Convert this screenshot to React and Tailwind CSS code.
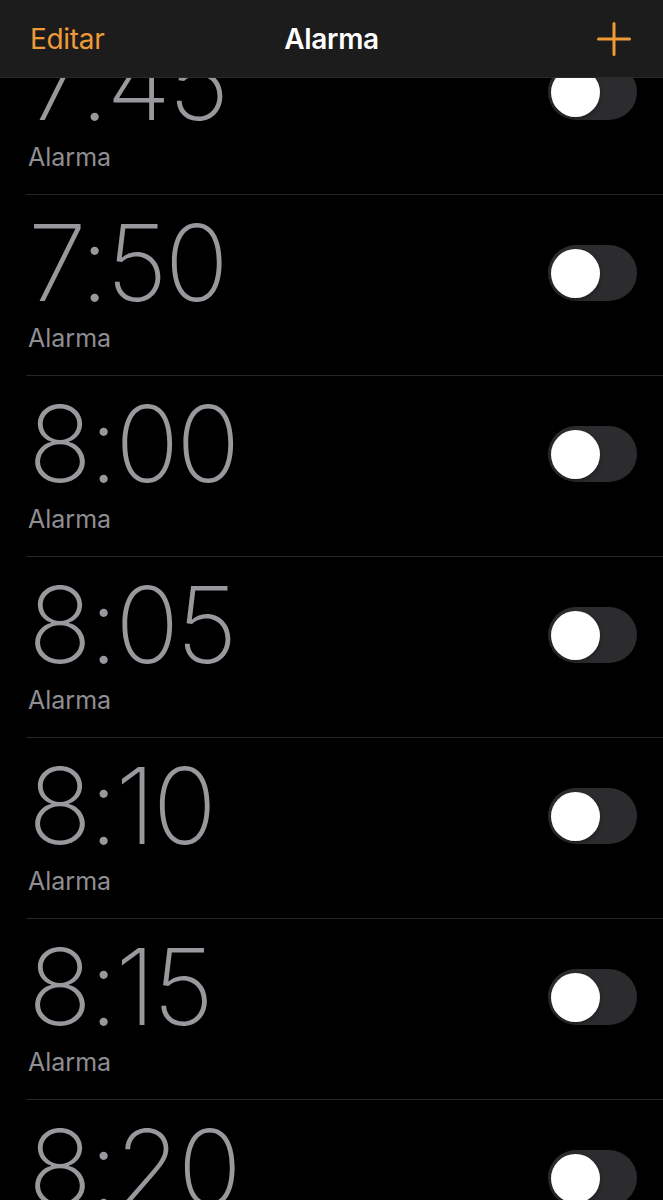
// App.jsx
// iOS style alarm list (dark mode), scrolled a bit so the first row hides under the nav bar

const alarms = ['7:45', '7:50', '8:00', '8:05', '8:10', '8:15', '8:20']

function Toggle() {
  return (
    <div className="relative h-[56px] w-[89px] rounded-full bg-[#2c2c2f]">
      <div className="absolute left-[3px] top-[4px] h-[49px] w-[49px] rounded-full bg-white shadow-[0_2px_4px_rgba(0,0,0,0.35)]" />
    </div>
  )
}

function AlarmRow({ time }) {
  return (
    <div className="flex h-[181px] items-start justify-between border-b border-[#262628] pr-[26px]">
      <div className="flex flex-col pl-[2px] pt-[15px]">
        <span className="text-[106px] font-extralight leading-none tracking-[-3px] text-[#98989d]">
          {time}
        </span>
        <span className="mt-[10px] text-[25px] leading-none text-[#8e8e93]">Alarma</span>
      </div>
      <div className="mt-[50px]">
        <Toggle />
      </div>
    </div>
  )
}

export default function App() {
  return (
    <div
      className="relative h-[1200px] w-full overflow-hidden bg-black"
      style={{ fontFamily: 'Inter, "Noto Sans", sans-serif' }}
    >
      {/* list, scrolled up by a few px */}
      <div className="pl-[26px] pt-[14px]">
        {alarms.map((t) => (
          <AlarmRow key={t} time={t} />
        ))}
      </div>

      {/* nav bar sits over the list */}
      <div className="absolute inset-x-0 top-0 flex h-[78px] items-center justify-between border-b border-[#2a2a2a] bg-[#1c1c1c] px-[30px]">
        <span className="text-[28px] leading-none tracking-[-0.3px] text-[#f09a37]">Editar</span>
        <span className="absolute left-1/2 -translate-x-1/2 text-[28px] font-semibold leading-none tracking-[-0.3px] text-white">
          Alarma
        </span>
        <svg width="34" height="34" viewBox="0 0 34 34" className="mr-[2px]">
          <path d="M17 1.5v31M1.5 17h31" stroke="#f09a37" strokeWidth="3" strokeLinecap="round" />
        </svg>
      </div>
    </div>
  )
}
